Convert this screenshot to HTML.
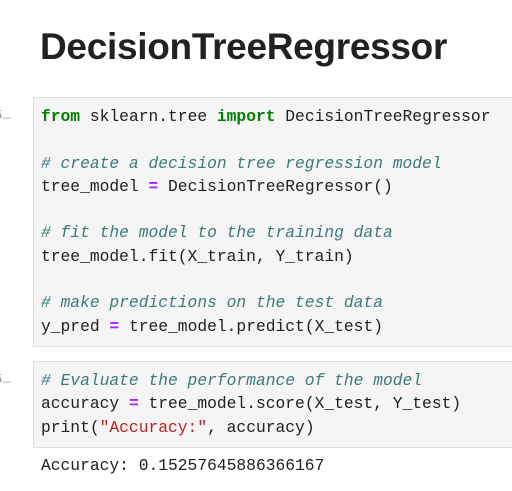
<!DOCTYPE html>
<html><head><style>
body{margin:0;width:512px;height:491px;background:#fff;overflow:hidden;position:relative;font-family:"Liberation Sans",sans-serif}
h1{position:absolute;left:40px;top:26px;margin:0;font-size:37px;font-weight:bold;color:#212121;letter-spacing:-0.3px}
.cell{position:absolute;left:33px;right:-2px;background:#f5f5f5;border:1px solid #e0e0e0}
pre{margin:0;font-family:"Liberation Mono",monospace;font-size:16.3px;line-height:23.3px;color:#212121;padding-left:7px}
.k{color:#008000;font-weight:bold}.c{color:#3d7a7a;font-style:italic}.o{color:#aa22ff;font-weight:bold}.s{color:#ba2121}
.p{position:absolute;left:-6px;font-family:"Liberation Mono",monospace;font-size:14px;color:#999}
</style></head><body>
<h1>DecisionTreeRegressor</h1>
<div class="p" style="top:108px">5…</div>
<div class="cell" style="top:97px;height:248px"><pre style="padding-top:7px"><span class="k">from</span> sklearn.tree <span class="k">import</span> DecisionTreeRegressor

<span class="c"># create a decision tree regression model</span>
tree_model <span class="o">=</span> DecisionTreeRegressor()

<span class="c"># fit the model to the training data</span>
tree_model.fit(X_train, Y_train)

<span class="c"># make predictions on the test data</span>
y_pred <span class="o">=</span> tree_model.predict(X_test)</pre></div>
<div class="p" style="top:372px">5…</div>
<div class="cell" style="top:361px;height:85px"><pre style="padding-top:7px"><span class="c"># Evaluate the performance of the model</span>
accuracy <span class="o">=</span> tree_model.score(X_test, Y_test)
print(<span class="s">"Accuracy:"</span>, accuracy)</pre></div>
<pre style="position:absolute;left:34px;top:454px;font-size:16.3px">Accuracy: 0.15257645886366167</pre>
</body></html>
